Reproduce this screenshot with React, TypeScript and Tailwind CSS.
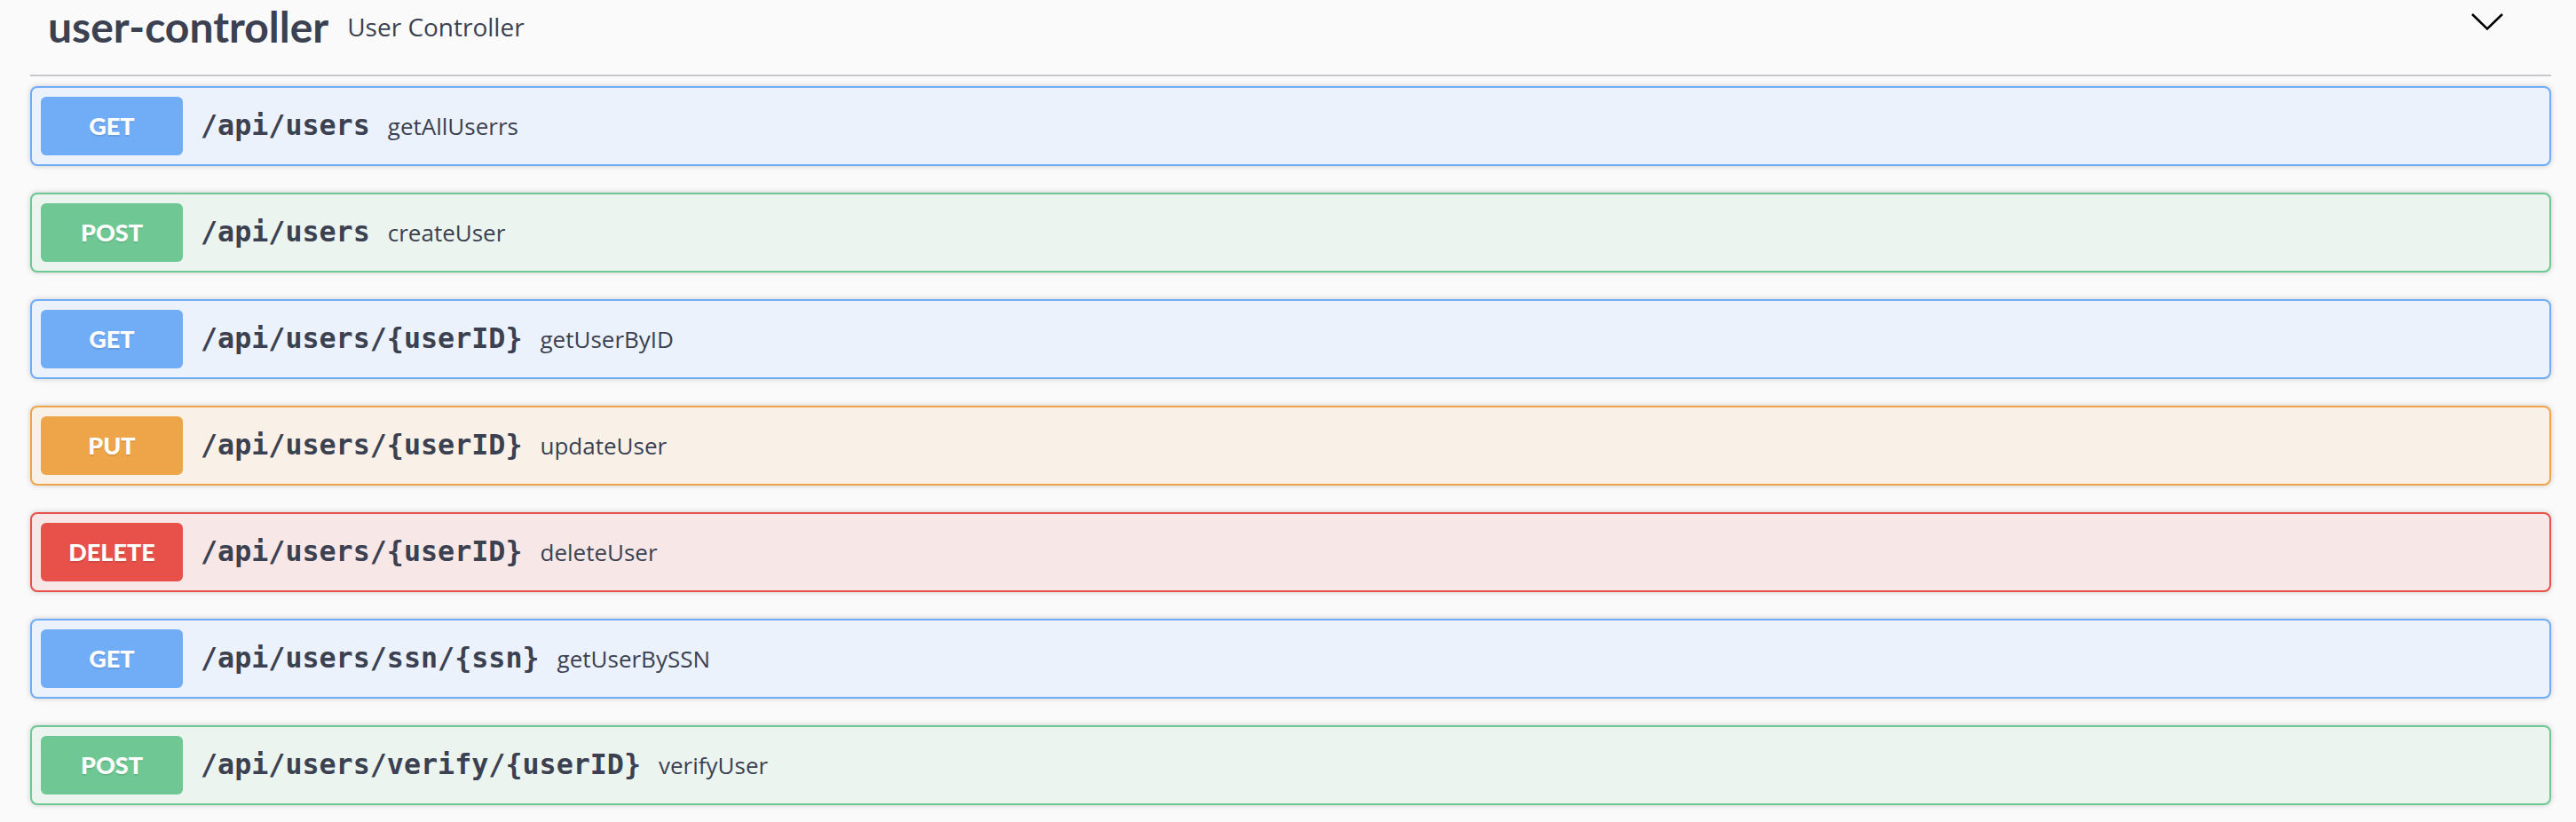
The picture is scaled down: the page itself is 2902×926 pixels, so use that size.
type Method = 'GET' | 'POST' | 'PUT' | 'DELETE';

type Endpoint = {
  method: Method;
  path: string;
  summary: string;
};

const endpoints: Endpoint[] = [
  { method: 'GET', path: '/api/users', summary: 'getAllUserrs' },
  { method: 'POST', path: '/api/users', summary: 'createUser' },
  { method: 'GET', path: '/api/users/{userID}', summary: 'getUserByID' },
  { method: 'PUT', path: '/api/users/{userID}', summary: 'updateUser' },
  { method: 'DELETE', path: '/api/users/{userID}', summary: 'deleteUser' },
  { method: 'GET', path: '/api/users/ssn/{ssn}', summary: 'getUserBySSN' },
  { method: 'POST', path: '/api/users/verify/{userID}', summary: 'verifyUser' },
];

// full class strings so tailwind picks them up
const styles: Record<Method, { row: string; badge: string }> = {
  GET: { row: 'border-[#71adf6] bg-[#ebf2fb]', badge: 'bg-[#71adf6]' },
  POST: { row: 'border-[#6fc894] bg-[#ebf4ef]', badge: 'bg-[#6fc894]' },
  PUT: { row: 'border-[#eea54a] bg-[#f9f1e8]', badge: 'bg-[#eea54a]' },
  DELETE: { row: 'border-[#e8514a] bg-[#f8e7e7]', badge: 'bg-[#e8514a]' },
};

function OpBlock({ op }: { op: Endpoint }) {
  const s = styles[op.method];
  return (
    <div
      className={`mb-[30px] flex items-center rounded-[8px] border-2 p-[10px] shadow-[0_0_6px_rgba(0,0,0,0.19)] ${s.row}`}
    >
      <span
        className={`flex h-[66px] w-[160px] shrink-0 items-center justify-center rounded-[6px] font-['Lato',sans-serif] text-[27px] font-black text-white [text-shadow:0_2px_0_rgba(0,0,0,0.1)] ${s.badge}`}
      >
        {op.method}
      </span>
      <span className="px-[20px] font-['DejaVu_Sans_Mono',monospace] text-[31.7px] font-bold text-[#3b4151]">
        {op.path}
      </span>
      <span className="font-['Open_Sans',sans-serif] text-[26px] text-[#3b4151]">{op.summary}</span>
    </div>
  );
}

export default function App() {
  return (
    <div className="h-[926px] w-[2902px] overflow-hidden bg-[#fafafa] pl-[34px]">
      <div className="w-[2840px]">
        {/* tag header */}
        <div className="mb-[11px] flex h-[86px] items-center border-b-2 border-[#c6c7ca] pb-[24px] pl-[20px] pr-[53px]">
          <h3 className="font-['Lato',sans-serif] text-[48px] leading-[48px] font-bold text-[#3b4151]">
            user-controller
          </h3>
          <small className="ml-[21px] font-['Open_Sans',sans-serif] text-[28px] text-[#3b4151]">
            User Controller
          </small>
          <div className="flex-1" />
          <svg width="38" height="22" viewBox="0 0 38 22" className="mb-[10px]">
            <polyline points="2,2 19,18.5 36,2" fill="none" stroke="#000" strokeWidth="2.6" />
          </svg>
        </div>

        {endpoints.map((op, i) => (
          <OpBlock key={i} op={op} />
        ))}
      </div>
    </div>
  );
}
